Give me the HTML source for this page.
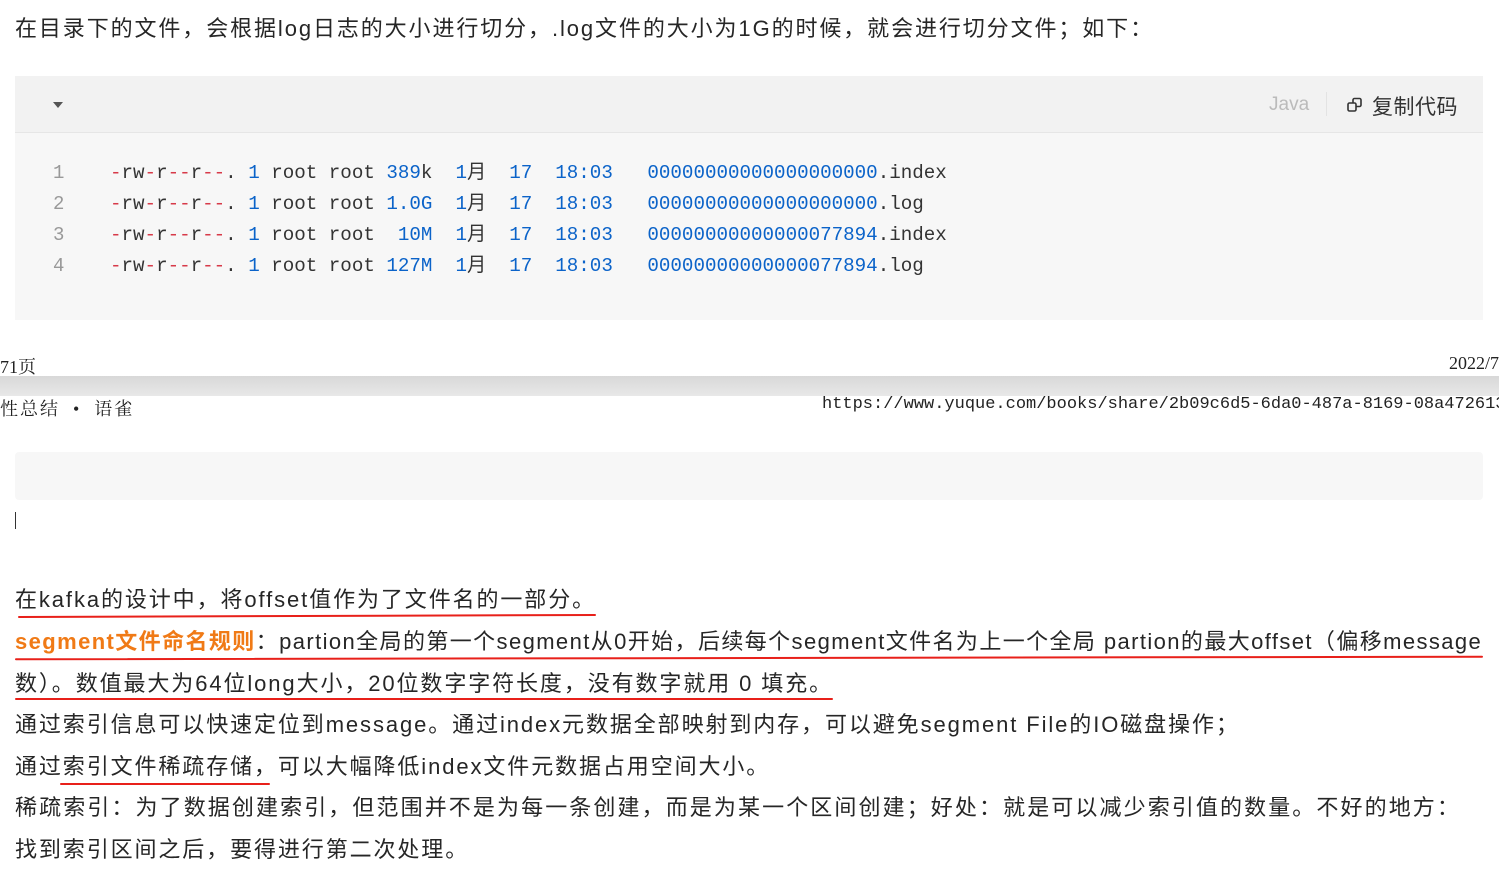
<!DOCTYPE html>
<html><head><meta charset="utf-8"><style>
*{margin:0;padding:0;box-sizing:border-box}
body{width:1499px;height:890px;background:#fff;position:relative;overflow:hidden;font-family:"Liberation Sans","Noto Sans CJK SC",sans-serif;color:#262626}
.t{position:absolute;left:15px;font-size:22px;white-space:nowrap;line-height:30px;letter-spacing:1.9px}
.code{position:absolute;left:15px;top:76px;width:1468px;height:244px;background:#f7f7f7}
.hd{height:57px;background:#f2f2f2;border-bottom:1px solid #e6e6e6;position:relative}
.ln{position:absolute;left:38px;font:19px "Liberation Mono",monospace;color:#999;line-height:31px}
.cl{position:absolute;left:95px;font:19.2px "Liberation Mono","Noto Sans CJK SC",monospace;color:#333;line-height:31px;white-space:pre}
.r{color:#d73a49}.b{color:#0b63c9}
.u{position:absolute;height:2px;background:#e8201a;border-radius:2px}
.serif{position:absolute;font-family:"Liberation Serif","Noto Serif CJK SC",serif;font-size:18px;color:#222;white-space:nowrap}
</style></head><body>
<div class="t" style="top:14px">在目录下的文件，会根据log日志的大小进行切分，.log文件的大小为1G的时候，就会进行切分文件；如下：</div>
<div class="code">
 <div class="hd">
  <div style="position:absolute;left:38px;top:26px;width:0;height:0;border-left:5px solid transparent;border-right:5px solid transparent;border-top:6px solid #555"></div>
  <div style="position:absolute;left:1254px;top:18px;font-size:19px;color:#bbb">Java</div>
  <div style="position:absolute;left:1311px;top:16px;width:1px;height:24px;background:#e3e3e3"></div>
  <svg style="position:absolute;left:1332px;top:21px" width="16" height="16" viewBox="0 0 16 16" fill="none" stroke="#333" stroke-width="1.6"><rect x="1" y="6" width="8" height="8" rx="1.5"/><path d="M6 6V3a1.5 1.5 0 0 1 1.5-1.5h5A1.5 1.5 0 0 1 14 3v5a1.5 1.5 0 0 1-1.5 1.5H9"/></svg>
  <div style="position:absolute;left:1357px;top:15px;font-size:21px;color:#333;letter-spacing:0.5px">复制代码</div>
 </div>
 <div class="ln" style="top:82px">1<br>2<br>3<br>4</div>
 <div class="cl" style="top:82px"><span class="r">-</span>rw<span class="r">-</span>r<span class="r">--</span>r<span class="r">--</span>. <span class="b">1</span> root root <span class="b">389</span>k  <span class="b">1</span>月  <span class="b">17</span>  <span class="b">18:03</span>   <span class="b">00000000000000000000</span>.index
<span class="r">-</span>rw<span class="r">-</span>r<span class="r">--</span>r<span class="r">--</span>. <span class="b">1</span> root root <span class="b">1.0G</span>  <span class="b">1</span>月  <span class="b">17</span>  <span class="b">18:03</span>   <span class="b">00000000000000000000</span>.log
<span class="r">-</span>rw<span class="r">-</span>r<span class="r">--</span>r<span class="r">--</span>. <span class="b">1</span> root root  <span class="b">10M</span>  <span class="b">1</span>月  <span class="b">17</span>  <span class="b">18:03</span>   <span class="b">00000000000000077894</span>.index
<span class="r">-</span>rw<span class="r">-</span>r<span class="r">--</span>r<span class="r">--</span>. <span class="b">1</span> root root <span class="b">127M</span>  <span class="b">1</span>月  <span class="b">17</span>  <span class="b">18:03</span>   <span class="b">00000000000000077894</span>.log</div>
</div>
<div class="serif" style="left:0;top:353px">71页</div>
<div class="serif" style="right:0;top:353px">2022/7</div>
<div style="position:absolute;left:0;top:376px;width:1499px;height:20px;background:linear-gradient(#d8d8d8,#e8e8e8)"></div>
<div class="serif" style="left:0;top:395px;letter-spacing:2px">性总结 &nbsp;•&nbsp; 语雀</div>
<div class="serif" style="left:822px;top:395px;font-family:'Liberation Mono','Noto Serif CJK SC',monospace;font-size:17px">https://www.yuque.com/books/share/2b09c6d5-6da0-487a-8169-08a4726131</div>
<div style="position:absolute;left:15px;top:452px;width:1468px;height:48px;background:#f7f7f7;border-radius:4px"></div>
<div style="position:absolute;left:15px;top:512px;width:1px;height:17px;background:#333"></div>
<div class="t" style="top:585px">在kafka的设计中，将offset值作为了文件名的一部分。</div>
<div class="t" style="top:627px;letter-spacing:1.4px"><b style="color:#f07a16">segment文件命名规则</b>：partion全局的第一个segment从0开始，后续每个segment文件名为上一个全局 partion的最大offset（偏移message</div>
<div class="t" style="top:669px">数）。数值最大为64位long大小，20位数字字符长度，没有数字就用 0 填充。</div>
<div class="t" style="top:710px">通过索引信息可以快速定位到message。通过index元数据全部映射到内存，可以避免segment File的IO磁盘操作；</div>
<div class="t" style="top:752px">通过索引文件稀疏存储，可以大幅降低index文件元数据占用空间大小。</div>
<div class="t" style="top:793px;letter-spacing:2.1px">稀疏索引：为了数据创建索引，但范围并不是为每一条创建，而是为某一个区间创建；好处：就是可以减少索引值的数量。不好的地方：</div>
<div class="t" style="top:835px">找到索引区间之后，要得进行第二次处理。</div>
<div class="u" style="left:18px;top:615px;width:578px;transform:rotate(-0.2deg)"></div>
<div class="u" style="left:15px;top:657px;width:1468px;transform:rotate(-0.1deg)"></div>
<div class="u" style="left:15px;top:698px;width:818px"></div>
<div class="u" style="left:60px;top:783px;width:210px"></div>
</body></html>
